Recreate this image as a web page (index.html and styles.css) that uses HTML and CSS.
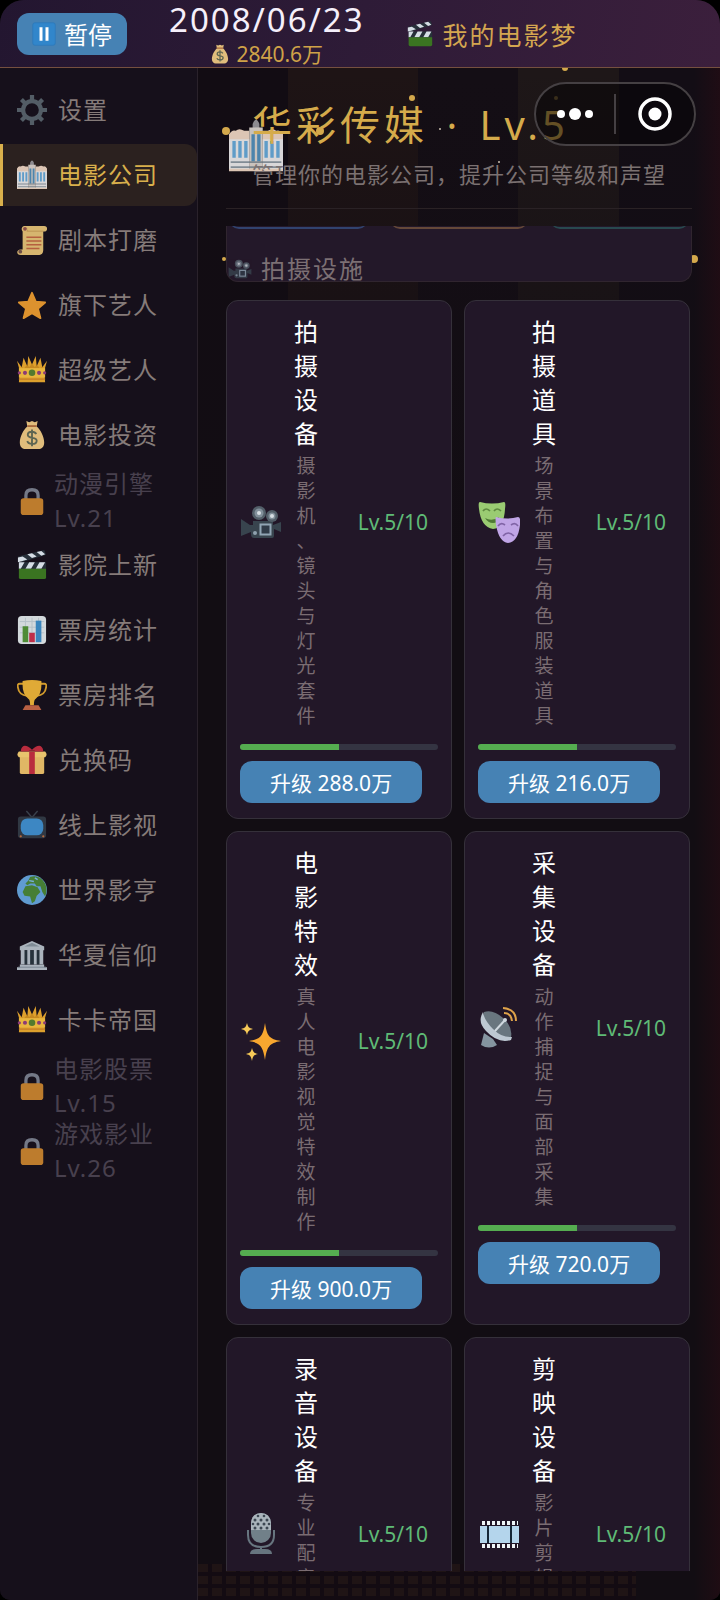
FILE: index.html
```html
<!DOCTYPE html>
<html lang="zh-CN">
<head>
<meta charset="utf-8">
<meta name="viewport" content="width=device-width, initial-scale=1">
<title>我的电影梦</title>
<link rel="stylesheet" href="styles.css">
</head>
<body>
<svg class="defs" aria-hidden="true">
  <symbol id="pause" viewBox="0 0 32 32"><rect x="1" y="1" width="30" height="30" rx="3" fill="#3186cb" stroke="#2b78b8"/><path fill="#fff" d="M10 7h4v18h-4zM18 7h4v18h-4z"/></symbol>
  <symbol id="bag" viewBox="0 0 32 32"><path fill="#e0bd7c" d="M10 1l3 1.500 3-1.500 3 1.500 3-1.500-1 6c4 3 8 11 8 17 0 5-3 7-6 7H9c-3 0-6-2-6-7 0-6 4-14 8-17z"/><path d="M11 6.500h10" stroke="#a8693b" stroke-width="2"/><path d="M20.500 15c-1-2-2.500-2.500-4.500-2.500-2.500 0-4.500 1.200-4.500 3.300 0 4.700 9.500 2 9.500 6.200 0 2.300-2 3.500-5 3.500-2.600 0-4.500-1-5-3M16 10v18" fill="none" stroke="#5d6652" stroke-width="2"/></symbol>
  <symbol id="clap" viewBox="0 0 32 32"><path fill="#27303a" d="M1 7L29 0l2 5-26 8z"/><path fill="#d5dde5" d="M1 8l5-1 5 3-6 2-4 1zM11 4.500l5-1 5 3.500-5 1.500zM21 2l5-1 4 3.500-4 1.500z"/><path fill="#27303a" d="M2 13h29v8H2z"/><path fill="#d5dde5" d="M2 13h6l-4 7H2zM13 13h6l-4 7H9zM24 13h6l-4 7h-6z"/><path fill="#3a7421" d="M2 20h29v9q0 2-2 2H4q-2 0-2-2z"/></symbol>
  <symbol id="gear" viewBox="0 0 32 32"><g fill="none" stroke="#535d66"><circle cx="16" cy="16" r="9.500" stroke-width="4.500"/><path stroke-width="4.500" d="M16 0v6M16 26v6M0 16h6M26 16h6M4.700 4.700l4 4M23.300 23.300l4 4M4.700 27.300l4-4M23.300 8.700l4-4"/></g></symbol>
  <symbol id="building" viewBox="0 0 32 32"><path fill="#8d8b90" d="M14 3q2-5 4 0v4h-4z"/><path fill="#c9c2bd" d="M12 5h8v25h-8z"/><path fill="#dcc5b4" d="M0 9q2-3 4-2 2-2 5 0h3v23H0zM32 9q-2-3-4-2-2-2-5 0h-3v23h12z"/><path fill="#d9d7d8" d="M0 12h12v18H0zM20 12h12v18H20z"/><path fill="#5f9cc8" d="M2 13h2v10H2zM5.500 13h2v10h-2zM9 13h2v10H9zM21 13h2v10h-2zM24.500 13h2v10h-2zM28 13h2v10h-2z"/><path fill="#4c84ac" d="M13.300 9h2v16h-2zM16.700 9h2v16h-2z"/><path fill="#5b6b78" d="M1 25h30v1H1zM1 28h30v1H1z" opacity=".7"/><path fill="#dcc5b4" d="M0 29.500h32V31H0z"/></symbol>
  <symbol id="scroll" viewBox="0 0 32 32"><path fill="#d6b56f" d="M8 1h21c4 0 4 5 1 6h-2v20c0 3-2 5-4 5H4c-5 0-5-6 0-6h2V7C4 5 5 1 8 1z"/><path fill="#b48a4a" d="M10 3q3 2 0 4h18v-1H12z"/><circle cx="8.500" cy="4" r="2" fill="#8a4d48"/><circle cx="3.500" cy="28.500" r="2" fill="#6b4e48"/><path d="M10 13h16M10 17h16M10 21h16M10 25h14" stroke="#b5603f" stroke-width="1.500"/></symbol>
  <symbol id="star" viewBox="0 0 32 32"><path fill="#dd922e" stroke="#dd922e" stroke-width="2" stroke-linejoin="round" d="M16 3l4 9.500 10 .8-7.600 6.600L25 30l-9-5.300L7 30l2.600-10.100L2 13.300l10-.8z"/></symbol>
  <symbol id="crown" viewBox="0 0 32 32"><path fill="#dda02d" d="M2 29L3 17 0 6l5 7 2-10 4 9 1-11 4 9 4-9 1 11 4-9 2 10 5-7-3 11 1 12z"/><path fill="#b77918" d="M5 12l2 3 4-5 2 3 3-4 3 4 2-3 4 5 2-3v6H5z" opacity=".6"/><path fill="#e9b63e" d="M2 14h28v10H2z"/><circle cx="16" cy="19" r="3.500" fill="#547a2e"/><g fill="#8b3b77"><circle cx="8.500" cy="19" r="2.200"/><circle cx="23.500" cy="19" r="2.200"/><circle cx="2.500" cy="19" r="1.700"/><circle cx="29.500" cy="19" r="1.700"/></g><path fill="#c88028" d="M2 25h28v1.500H2z"/></symbol>
  <symbol id="lock" viewBox="0 0 32 32"><path d="M9.500 14V10q0-6 6.500-6t6.500 6v4" fill="none" stroke="#747987" stroke-width="3.500"/><rect x="4" y="13" width="24" height="18" rx="3" fill="#bd7c2d"/></symbol>
  <symbol id="chart" viewBox="0 0 32 32"><rect x="1" y="1" width="30" height="30" rx="4" fill="#d3d9dc"/><path d="M3 7h26M3 13h26M3 19h26M9 3v26M16 3v26M23 3v26" stroke="#b4c0c8" stroke-width="1"/><path fill="#4e8b35" d="M6 12h6v17H6z"/><path fill="#be2f49" d="M13 19h6v10h-6z"/><path fill="#3a85bd" d="M20 6h6v23h-6z"/></symbol>
  <symbol id="trophy" viewBox="0 0 32 32"><path d="M8 4H3q-3 0-2 4 1 8 10 9M24 4h5q3 0 2 4-1 8-10 9" fill="none" stroke="#d29b2c" stroke-width="2"/><path fill="#e0aa36" d="M6 1q10-2 20 0 1 14-6 19-2 1-2 7h-4q0-6-2-7Q5 15 6 1z"/><path fill="#b96043" d="M9 27h14l3 5H6z"/></symbol>
  <symbol id="gift" viewBox="0 0 32 32"><path fill="#e0b765" d="M3 12h26v17q0 2-2 2H5q-2 0-2-2z"/><path fill="#e8c36d" d="M2 7h28q3 3 0 6H2q-3-3 0-6z"/><path fill="#b92c3e" d="M13 6h6v25h-6zM16 5Q11 0 7 1 4 3 4 7h24q0-4-3-6-4-1-9 4z"/></symbol>
  <symbol id="tv" viewBox="0 0 32 32"><path d="M10 1l6 7 6-7" fill="none" stroke="#3a414c" stroke-width="1.500"/><rect x="1" y="7" width="30" height="23" rx="3" fill="#303843"/><rect x="4" y="9" width="24" height="18" rx="7" fill="#3d87c3"/><circle cx="4" cy="28" r="1.200" fill="#b56a40"/><circle cx="28" cy="28" r="1.200" fill="#b56a40"/></symbol>
  <symbol id="globe" viewBox="0 0 32 32"><circle cx="16" cy="16" r="16" fill="#609bd0"/><path fill="#467e35" d="M14 2q10-3 16 7 3 7 0 14l-3-5-2-6-4 0-2-3-5 0-3 2-2-2 3-3zM9 12l7-1 6 2 3 5-4 4-2 6-3 2-2-7-6-1-2-4z"/><path d="M13 6l5 1M19 3l3 2" stroke="#77afd7" stroke-width="1.500"/></symbol>
  <symbol id="temple" viewBox="0 0 32 32"><path fill="#aab3bc" d="M16 1l13 6v4H3V7zM3 26h26v3h3v3H0v-3h3z"/><path fill="#26323b" d="M5 11h22v15H5z"/><path fill="#aab3bc" d="M4 10h4v16H4zM11 10h3v16h-3zM18 10h3v16h-3zM24 10h4v16h-4z"/><path d="M8 7l8-4 8 4z" fill="#7f8b95"/><path d="M1 29h30" stroke="#778390"/></symbol>
  <symbol id="camera" viewBox="0 0 42 42"><path fill="#38444e" d="M1 18l9 6h3v-4h20v4l8-3v10l-7-3v7q0 2-2 2H14q-3 0-3-4v-2l-10 4z"/><circle cx="19" cy="12" r="7" fill="#535f69"/><circle cx="32" cy="15" r="6" fill="#535f69"/><circle cx="19" cy="12" r="4.500" fill="#82909b"/><circle cx="32" cy="15" r="3.500" fill="#82909b"/><circle cx="19" cy="12" r="2" fill="#d7dee3"/><circle cx="32" cy="15" r="2" fill="#d7dee3"/><rect x="20.500" y="23.500" width="10" height="10" fill="#303b48" stroke="#91a5b4" stroke-width="2"/><circle cx="15" cy="32" r="2" fill="#8fa1ae"/></symbol>
  <symbol id="masks" viewBox="0 0 42 42"><path fill="#9acb72" d="M2 1q12 3 24 0 2 0 1 7-1 19-12 20Q3 26 1 8 0 1 2 1z"/><path d="M5 10q3-4 7 0M16 10q3-4 7 0" fill="none" stroke="#5f8a40" stroke-width="1.700"/><path fill="#4f7a34" d="M7 17q7 4 14-1-1 6-6 6t-8-5z"/><path fill="#c0a5e6" d="M18 16q12 3 22 0 3 0 2 8-2 17-12 18-9-1-12-18-1-8 0-8z"/><path d="M20 25q3-4 7-1M33 24q4-3 7 1M25 35q5-6 11 0" fill="none" stroke="#8064a6" stroke-width="1.700"/></symbol>
  <symbol id="sparkle" viewBox="0 0 42 42"><path fill="#f8a72f" d="M25 3c2 13 4 16 16 18-12 2-14 6-16 19-2-13-4-17-16-19 12-2 14-5 16-18z"/><path fill="#f7ca58" d="M7 3c1 4 2 5 6 6-4 1-5 2-6 6-1-4-2-5-6-6 4-1 5-2 6-6zM12 28c1 4 2 5 6 6-4 1-5 2-6 7-1-5-2-6-6-7 4-1 5-2 6-6z"/></symbol>
  <symbol id="dish" viewBox="0 0 42 42"><path fill="#8595a0" d="M6 26l9 6 4 6q-8 5-16 0z"/><path fill="#69767f" d="M6 5Q15 2 25 11t8 19q-10 4-20-7T6 5z"/><path fill="#bdc8d2" d="M5 5q-6 10 3 19 12 13 25 9l1-3q-10 1-19-8T5 5z"/><path d="M17 24l10-11" stroke="#cfd8df" stroke-width="2"/><circle cx="27" cy="13" r="2" fill="#cfd8df"/><path d="M26 6q7 0 8 8M25 1q13 1 13 13" fill="none" stroke="#dfa34a" stroke-width="2"/></symbol>
  <symbol id="mic" viewBox="0 0 42 42"><rect x="11" y="0" width="20" height="30" rx="10" fill="#718089"/><path fill="#aab5bc" d="M11 17v-7q1-10 10-10t10 10v7z"/><g fill="#3d4853"><circle cx="18" cy="3" r="1.300"/><circle cx="24" cy="3" r="1.300"/><circle cx="15" cy="7" r="1.500"/><circle cx="21" cy="7" r="1.500"/><circle cx="27" cy="7" r="1.500"/><circle cx="13" cy="11" r="1.300"/><circle cx="18" cy="11" r="1.500"/><circle cx="24" cy="11" r="1.500"/><circle cx="29" cy="11" r="1.300"/><circle cx="15" cy="15" r="1.500"/><circle cx="21" cy="15" r="1.500"/><circle cx="27" cy="15" r="1.500"/></g><path d="M8 17v5q0 12 13 12t13-12v-5M21 33v5" fill="none" stroke="#67757f" stroke-width="2"/><path fill="#67757f" d="M10 41q0-5 7-5h8q7 0 7 5z"/></symbol>
  <symbol id="film" viewBox="0 0 42 42"><path d="M4 10h36M4 33h36" stroke="#eef4f7" stroke-width="4" stroke-dasharray="3 2"/><path fill="#b4d5ec" d="M2 13h39v17H2z"/><path d="M10 13v17M33 13v17" stroke="#162737" stroke-width="2"/></symbol>
</svg>

<div class="app">
  <header class="topbar">
    <button class="pause" type="button"><svg class="ic24" aria-hidden="true"><use href="#pause"/></svg>暂停</button>
    <div class="status">
      <time class="date" datetime="2008-06-23">2008/06/23</time>
      <span class="money"><svg class="ic20" aria-hidden="true"><use href="#bag"/></svg>2840.6万</span>
    </div>
    <div class="brand"><svg class="ic26" aria-hidden="true"><use href="#clap"/></svg>我的电影梦</div>
  </header>

  <div class="body">
    <nav class="sidebar">
      <a class="item" href="#"><svg class="ic30"><use href="#gear"/></svg><span>设置</span></a>
      <a class="item active" href="#" aria-current="page"><svg class="ic30"><use href="#building"/></svg><span>电影公司</span></a>
      <a class="item" href="#"><svg class="ic30"><use href="#scroll"/></svg><span>剧本打磨</span></a>
      <a class="item" href="#"><svg class="ic30"><use href="#star"/></svg><span>旗下艺人</span></a>
      <a class="item" href="#"><svg class="ic30"><use href="#crown"/></svg><span>超级艺人</span></a>
      <a class="item" href="#"><svg class="ic30"><use href="#bag"/></svg><span>电影投资</span></a>
      <a class="item locked" href="#"><svg class="ic30"><use href="#lock"/></svg><span>动漫引擎<br>Lv.21</span></a>
      <a class="item" href="#"><svg class="ic30"><use href="#clap"/></svg><span>影院上新</span></a>
      <a class="item" href="#"><svg class="ic30"><use href="#chart"/></svg><span>票房统计</span></a>
      <a class="item" href="#"><svg class="ic30"><use href="#trophy"/></svg><span>票房排名</span></a>
      <a class="item" href="#"><svg class="ic30"><use href="#gift"/></svg><span>兑换码</span></a>
      <a class="item" href="#"><svg class="ic30"><use href="#tv"/></svg><span>线上影视</span></a>
      <a class="item" href="#"><svg class="ic30"><use href="#globe"/></svg><span>世界影亨</span></a>
      <a class="item" href="#"><svg class="ic30"><use href="#temple"/></svg><span>华夏信仰</span></a>
      <a class="item" href="#"><svg class="ic30"><use href="#crown"/></svg><span>卡卡帝国</span></a>
      <a class="item locked" href="#"><svg class="ic30"><use href="#lock"/></svg><span>电影股票<br>Lv.15</span></a>
      <a class="item locked" href="#"><svg class="ic30"><use href="#lock"/></svg><span>游戏影业<br>Lv.26</span></a>
    </nav>

    <main class="main">
      <svg class="confetti" viewBox="0 0 522 240" aria-hidden="true">
        <g fill="#d4a94c"><circle cx="28" cy="63" r="4"/><circle cx="122" cy="63" r="4"/><circle cx="214" cy="30" r="3"/><circle cx="367" cy="0" r="3"/><circle cx="496" cy="191" r="4"/><circle cx="358" cy="30" r="2" opacity=".5"/><circle cx="26" cy="191" r="2"/></g>
        <g fill="#c9bfae"><circle cx="242" cy="61" r="1"/><circle cx="301" cy="94" r="1"/></g>
      </svg>
      <header class="company">
        <svg class="logo" aria-hidden="true"><use href="#building"/></svg>
        <h1>华彩传媒 <span class="dot">·</span> Lv.5</h1>
        <p>管理你的电影公司，提升公司等级和声望</p>
      </header>

      <div class="content">
        <section class="panel">
          <div class="edges"><i class="blue"></i><i class="orange"></i><i class="teal"></i></div>
          <h2><svg class="ic26" aria-hidden="true"><use href="#camera"/></svg>拍摄设施</h2>
        </section>
        <div class="grid">
          <article class="card">
            <div class="info"><svg class="ic42"><use href="#camera"/></svg><div class="text"><h3>拍摄设备</h3><p>摄影机、镜头与灯光套件</p></div><span class="level">Lv.5/10</span></div>
            <div class="bar"><div class="fill"></div></div>
            <button class="upgrade" type="button">升级 288.0万</button>
          </article>
          <article class="card">
            <div class="info"><svg class="ic42"><use href="#masks"/></svg><div class="text"><h3>拍摄道具</h3><p>场景布置与角色服装道具</p></div><span class="level">Lv.5/10</span></div>
            <div class="bar"><div class="fill"></div></div>
            <button class="upgrade" type="button">升级 216.0万</button>
          </article>
          <article class="card">
            <div class="info"><svg class="ic42"><use href="#sparkle"/></svg><div class="text"><h3>电影特效</h3><p>真人电影视觉特效制作</p></div><span class="level">Lv.5/10</span></div>
            <div class="bar"><div class="fill"></div></div>
            <button class="upgrade" type="button">升级 900.0万</button>
          </article>
          <article class="card">
            <div class="info"><svg class="ic42"><use href="#dish"/></svg><div class="text"><h3>采集设备</h3><p>动作捕捉与面部采集</p></div><span class="level">Lv.5/10</span></div>
            <div class="bar"><div class="fill"></div></div>
            <button class="upgrade" type="button">升级 720.0万</button>
          </article>
          <article class="card">
            <div class="info"><svg class="ic42"><use href="#mic"/></svg><div class="text"><h3>录音设备</h3><p>专业配音与音效制作</p></div><span class="level">Lv.5/10</span></div>
          </article>
          <article class="card">
            <div class="info"><svg class="ic42"><use href="#film"/></svg><div class="text"><h3>剪映设备</h3><p>影片剪辑与后期制作</p></div><span class="level">Lv.5/10</span></div>
          </article>
        </div>
      </div>
    </main>
  </div>

  <div class="capsule">
    <button type="button" aria-label="更多"><svg viewBox="0 0 36 16" width="36" height="16"><g fill="#fff"><circle cx="4" cy="8" r="4"/><circle cx="18" cy="8" r="6"/><circle cx="32" cy="8" r="4"/></g></svg></button>
    <button type="button" aria-label="关闭"><svg viewBox="0 0 34 34" width="34" height="34"><circle cx="17" cy="17" r="15" fill="none" stroke="#fff" stroke-width="3.500"/><circle cx="17" cy="17" r="6.500" fill="#fff"/></svg></button>
  </div>
</div>
</body>
</html>
```
FILE: styles.css
```css
* { box-sizing: border-box; }

body {
  margin: 0;
  background: #000;
  font-family: "Noto Sans", "Noto Sans CJK SC", sans-serif;
}

h1, h2, h3, p { margin: 0; font-weight: 400; }
svg { display: block; flex: none; }
button { font: inherit; border: 0; padding: 0; }

.defs { position: absolute; width: 0; height: 0; }
.ic20 { width: 20px; height: 20px; }
.ic24 { width: 24px; height: 24px; }
.ic26 { width: 26px; height: 26px; }
.ic30 { width: 30px; height: 30px; }
.ic42 { width: 42px; height: 42px; }

.app {
  position: relative;
  display: flex;
  flex-direction: column;
  height: 100vh;
  overflow: hidden;
  border-radius: 24px 24px 10px 10px;
  background: #120d13;
}

/* Top bar */
.topbar {
  flex: none;
  display: flex;
  align-items: center;
  height: 68px;
  padding: 0 17px;
  gap: 42px;
  background: linear-gradient(100deg, #231630, #2e1b37 50%, #3b1f3c);
  border-bottom: 1px solid #75503f;
}
.pause {
  display: flex;
  align-items: center;
  justify-content: center;
  gap: 8px;
  width: 110px;
  height: 42px;
  border-radius: 12px;
  background: #4682b4;
  color: #fff;
  font-size: 24px;
}
.status { display: flex; flex-direction: column; align-items: center; }
.date { color: #f5effa; font-size: 33px; line-height: 40px; letter-spacing: 2px; }
.money {
  display: flex;
  align-items: center;
  gap: 6px;
  color: #cfa248;
  font-size: 21px;
  line-height: 28px;
}
.brand {
  display: flex;
  align-items: center;
  gap: 10px;
  color: #d4a650;
  font-size: 25px;
  letter-spacing: 2px;
}

/* Sidebar */
.body { flex: 1; display: flex; min-height: 0; }
.sidebar {
  flex: none;
  display: flex;
  flex-direction: column;
  gap: 3px;
  width: 198px;
  padding-top: 11px;
  background: #16101b;
  border-right: 1px solid #2a222b;
}
.item {
  display: flex;
  align-items: center;
  gap: 11px;
  height: 62px;
  padding-left: 14px;
  border-left: 3px solid transparent;
  border-radius: 0 12px 12px 0;
  color: #857b79;
  font-size: 24px;
  line-height: 34px;
  letter-spacing: 1px;
  text-decoration: none;
  white-space: nowrap;
}
.item.active { color: #d9b04c; background: #2b211f; border-left-color: #d9b04c; }
.item.locked { gap: 7px; padding-top: 2px; color: #48404e; }

/* Main column */
.main {
  position: relative;
  flex: 1;
  min-width: 0;
  display: flex;
  flex-direction: column;
  padding: 33px 28px 29px;
  background:
    linear-gradient(90deg, transparent 95%, rgba(60, 12, 20, .3)),
    linear-gradient(180deg, transparent, #120d13 540px),
    linear-gradient(90deg, #120c13 90px, #1e1415 90px 220px, #140e15 220px 320px, #1e1718 320px 421px, #130d15 421px);
}
.main::after {
  content: "";
  position: absolute;
  left: 0;
  bottom: 0;
  width: 84%;
  height: 36px;
  background:
    repeating-linear-gradient(90deg, transparent 0 10px, #130b12 10px 14px),
    repeating-linear-gradient(180deg, #1f1415 0 8px, #130b12 8px 12px);
}
.confetti { position: absolute; top: 0; left: 0; width: 522px; height: 240px; }
.company {
  position: relative;
  padding: 0 0 17px 26px;
  border-bottom: 1px solid #2a2225;
}
.logo { position: absolute; left: 3px; top: 18px; width: 54px; height: 54px; }
.company h1 {
  position: relative;
  color: #d5ab4b;
  font-size: 40px;
  line-height: 48px;
  letter-spacing: 4px;
  white-space: nowrap;
}
.dot { margin: 0 4px; }
.company p {
  position: relative;
  margin-top: 8px;
  color: #7b7171;
  font-size: 22px;
  line-height: 34px;
  letter-spacing: 1px;
  white-space: nowrap;
}

.content {
  position: relative;
  z-index: 1;
  flex: 1;
  min-height: 0;
  margin-top: 17px;
  overflow: hidden;
}
.panel {
  overflow: hidden;
  background: #231829;
  border: 1px solid #30252f;
  border-top: 0;
  border-radius: 0 0 12px 12px;
}
.edges { display: grid; grid-template-columns: repeat(3, 1fr); gap: 22px; margin-top: -17px; padding: 0 2px; }
.edges i { height: 20px; border-bottom: 2px solid; border-radius: 12px; }
.blue { color: #31436f; }
.orange { color: #654839; }
.teal { color: #28494f; }
.panel h2 {
  display: flex;
  align-items: center;
  gap: 8px;
  padding-top: 28px;
  color: #7c7074;
  font-size: 24px;
  line-height: 24px;
  letter-spacing: 2px;
}
.panel h2 svg { height: 24px; opacity: .8; }

/* Facility cards */
.grid {
  display: grid;
  grid-template-columns: 1fr 1fr;
  gap: 12px;
  margin: 18px 2px 0 0;
}
.card {
  padding: 14px 13px;
  border: 1px solid #35303a;
  border-radius: 12px;
  background: #221728;
}
.info { display: flex; align-items: center; gap: 12px; }
.text {
  width: 24px;
  text-align: center;
  line-break: anywhere;
}
.text h3 { color: #fff; font-size: 24px; line-height: 34px; }
.text p { margin-top: 3px; color: #7a6c72; font-size: 19px; line-height: 25px; }
.level { margin: 0 10px 0 auto; color: #5fba76; font-size: 21px; }
.bar {
  height: 6px;
  margin-top: 15px;
  border-radius: 3px;
  overflow: hidden;
  background: #343442;
}
.fill { width: 50%; height: 100%; background: #55ad50; }
.upgrade {
  display: block;
  height: 42px;
  margin-top: 11px;
  margin-bottom: 1px;
  padding: 0 30px;
  border-radius: 12px;
  background: #4682b4;
  color: #fff;
  font-size: 21px;
}

/* Floating mini-program capsule */
.capsule {
  position: absolute;
  top: 82px;
  right: 24px;
  display: flex;
  align-items: center;
  width: 162px;
  height: 64px;
  border: 2px solid #454043;
  border-radius: 32px;
  background: rgba(8, 5, 8, .55);
  z-index: 2;
}
.capsule button {
  flex: 1;
  display: flex;
  align-items: center;
  justify-content: center;
  height: 40px;
  background: none;
}
.capsule button + button { border-left: 2px solid #454043; }
```
